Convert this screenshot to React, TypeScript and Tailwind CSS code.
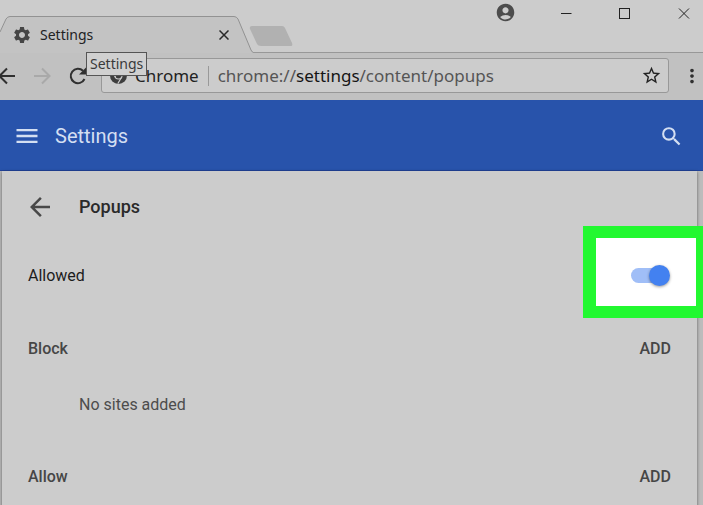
import { useState } from "react";
import { MdAccountCircle, MdArrowBack, MdMenu, MdMoreVert, MdSearch, MdSettings, MdStarBorder } from "react-icons/md";

const UI_FONT = "font-['Noto_Sans','Open_Sans',sans-serif]";

function TabStrip() {
  return (
    <div className="relative flex h-[53px] items-start justify-between bg-[#cccccc]">
      <div className="absolute inset-x-0 bottom-0 h-px bg-[#989898]" />
      <div className="relative flex h-[53px] items-start">
        <div className="relative flex h-[53px] w-[253px] items-center pt-4 pl-3 pr-[23px]">
          <svg className="absolute inset-0" width="253" height="53" viewBox="0 0 253 53" fill="none" aria-hidden="true">
            <path d="M-8 53 L0 32 L6 19 Q7.500 16.500 10 16.500 H234 Q236.500 16.500 238 19 L251 50 Q252 52.500 254 52.500 V53Z" fill="#c3c3c3" />
            <path d="M0 32 L6 19 Q7.500 16.500 10 16.500 H234 Q236.500 16.500 238 19 L251 50 Q252 52.500 254 52.500" stroke="#929292" />
          </svg>
          <MdSettings className="relative size-5 shrink-0 text-[#454545]" />
          <span className="relative ml-2 flex-1 text-sm text-[#222222]">Settings</span>
          <button aria-label="Close tab" className="relative flex size-3 items-center justify-center">
            <svg width="10" height="10" viewBox="0 0 10 10" stroke="#282828" strokeWidth="1.500" aria-hidden="true">
              <path d="M0.500 0.500 L9.500 9.500 M9.500 0.500 L0.500 9.500" />
            </svg>
          </button>
        </div>
        <button aria-label="New tab" className="mt-[26px] -ml-1">
          <svg width="44" height="20" viewBox="0 0 44 20" aria-hidden="true">
            <path d="M3 0 H33 Q35 0 36 2 L43 17 Q44 20 42 20 H12 Q9 20 8 18 L1 3 Q0 0 3 0Z" fill="#b1b1b1" />
          </svg>
        </button>
      </div>
      <div className="flex h-[25px] items-center pr-[13px] text-[#222222]">
        <button aria-label="Profile" className="mr-11">
          <MdAccountCircle className="size-[21px] text-[#4c4c4c]" />
        </button>
        <button aria-label="Minimize" className="mr-[46px]">
          <svg width="12" height="12" viewBox="0 0 12 12" stroke="currentColor" aria-hidden="true">
            <path d="M1 6.500 H11.500" />
          </svg>
        </button>
        <button aria-label="Maximize" className="mr-12">
          <svg width="12" height="12" viewBox="0 0 12 12" fill="none" stroke="currentColor" aria-hidden="true">
            <rect x="1.500" y="1.500" width="10" height="10" />
          </svg>
        </button>
        <button aria-label="Close">
          <svg width="12" height="12" viewBox="0 0 12 12" stroke="currentColor" aria-hidden="true">
            <path d="M1 1.500 L11 11.500 M11 1.500 L1 11.500" />
          </svg>
        </button>
      </div>
    </div>
  );
}

function Toolbar() {
  return (
    <div className="relative flex h-[47px] items-center bg-[#c1c1c1] pt-px pb-[3px]">
      <button aria-label="Back" className="-ml-1 text-[#303030]">
        <svg width="20" height="20" viewBox="0 0 20 20" fill="none" stroke="currentColor" strokeWidth="2" aria-hidden="true">
          <path d="M19 10 H4 M11 2.500 L3.500 10 L11 17.500" />
        </svg>
      </button>
      <button aria-label="Forward" className="ml-4 text-[#a9a9a9]">
        <svg width="20" height="20" viewBox="0 0 20 20" fill="none" stroke="currentColor" strokeWidth="2" aria-hidden="true">
          <path d="M2 10 H17 M10 2.500 L17.500 10 L10 17.500" />
        </svg>
      </button>
      <button aria-label="Reload" className="ml-4 text-[#303030]">
        <svg width="20" height="20" viewBox="0 0 20 20" fill="none" aria-hidden="true">
          <path d="M16.500 13 A7.200 7.200 0 1 1 15 4.800" stroke="currentColor" strokeWidth="2" />
          <path d="M18 1.500 V8.500 H11Z" fill="currentColor" />
        </svg>
      </button>
      <div className="ml-[13px] flex h-[35px] flex-1 items-center rounded-[3px] border border-[#989898] bg-[#cccccc] pr-1.5 pl-2">
        <svg className="shrink-0" width="17" height="17" viewBox="0 0 24 24" aria-hidden="true">
          <circle cx="12" cy="12" r="12" fill="#3e3e3e" />
          <circle cx="12" cy="12" r="5" fill="none" stroke="#cccccc" strokeWidth="1.600" />
          <path d="M12 7 H23 M7.700 14.500 L2 5 M16.300 14.500 L11 23.500" stroke="#cccccc" strokeWidth="1.600" />
        </svg>
        <span className="ml-2 text-[17px] text-[#222222]">Chrome</span>
        <span className="mx-[9px] h-5 w-px bg-[#999999]" />
        <span className="flex-1 text-[17px] text-[#555555]">
          chrome://<span className="text-[#151515]">settings</span>/content/popups
        </span>
        <button aria-label="Bookmark this page">
          <MdStarBorder className="size-[21px] text-[#222222]" />
        </button>
      </div>
      <button aria-label="Menu" className="ml-3 w-[22px]">
        <MdMoreVert className="size-[22px] text-[#303030]" />
      </button>
      <div role="tooltip" className="absolute -top-px left-[86px] border border-[#555555] bg-[#d0d0d0] px-[3px] text-sm leading-[22px] text-[#3a3a3a]">
        Settings
      </div>
    </div>
  );
}

function SiteSectionHeader({ title }: { title: string }) {
  return (
    <div className="flex h-16 items-center justify-between text-[#464646]">
      <h2 className="font-medium">{title}</h2>
      <button className="font-medium">ADD</button>
    </div>
  );
}

export default function App() {
  const [allowed, setAllowed] = useState(true);

  return (
    <div className="flex h-screen flex-col overflow-hidden bg-[#bcbcbc] font-[Roboto,sans-serif]">
      <div className={UI_FONT}>
        <TabStrip />
        <Toolbar />
      </div>

      <header className="flex h-[71px] shrink-0 items-center border-b border-[#20429a] bg-[#2853ab] pt-0.5 pr-[19px] pl-[13px] text-[#d4dff2]">
        <button aria-label="Main menu">
          <MdMenu className="size-7" />
        </button>
        <h1 className="ml-3.5 flex-1 text-xl">Settings</h1>
        <button aria-label="Search settings">
          <MdSearch className="size-[25px]" />
        </button>
      </header>

      <main className="mr-1.5 ml-0.5 flex-1 bg-[#cccccc] px-[26px] text-base shadow-[0_1px_3px_rgba(0,0,0,0.5)]">
        <div className="flex h-18 items-center text-[#2a2a2a]">
          <button aria-label="Back" className="-ml-[3px] text-[#484848]">
            <MdArrowBack className="size-[30px]" />
          </button>
          <h2 className="ml-6 text-lg font-medium">Popups</h2>
        </div>

        <div className="relative flex h-[65px] items-center justify-between text-[#1c1c1c]">
          <label htmlFor="allowed">Allowed</label>
          <div className="absolute -top-[17px] -right-[38px] h-[92px] w-[126px] border-x-13 border-y-12 border-[#22f830] bg-white" />
          <input
            id="allowed"
            type="checkbox"
            role="switch"
            checked={allowed}
            onChange={(event) => setAllowed(event.target.checked)}
            className="relative mr-2 h-[15px] w-8 appearance-none rounded-full bg-[#a0bef7] before:absolute before:-top-[3px] before:left-0 before:size-[21px] before:rounded-full before:bg-[#777777] before:shadow-[0_1px_3px_rgba(0,0,0,0.4)] checked:before:left-[18px] checked:before:bg-[#4381f0]"
          />
        </div>

        <div className="flex flex-col gap-4 pt-[9px]">
          <section>
            <SiteSectionHeader title="Block" />
            <p className="flex h-12 items-center pl-[51px] text-[#4c4c4c]">No sites added</p>
          </section>
          <section>
            <SiteSectionHeader title="Allow" />
          </section>
        </div>
      </main>
    </div>
  );
}
